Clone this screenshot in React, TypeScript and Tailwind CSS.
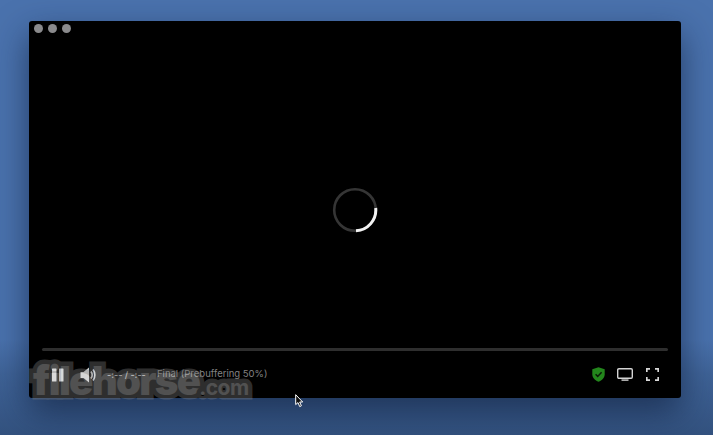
import React from 'react';

const sans = "font-['Inter','Liberation_Sans',sans-serif]";

const PauseIcon = () => (
  <svg width="14" height="14" viewBox="0 0 14 14" fill="#d8d8d8">
    <rect x="1" y="0.5" width="4.5" height="13" rx="0.5" />
    <rect x="8" y="0.5" width="4.5" height="13" rx="0.5" />
  </svg>
);

const VolumeIcon = () => (
  <svg width="16" height="16" viewBox="0 0 16 16" fill="none">
    <path d="M0.5 5H3.5L9 0.5V15.5L3.5 11H0.5Z" fill="#d0d0d0" />
    <path d="M11 4.5C12.4 6.5 12.4 9.5 11 11.5" stroke="#d0d0d0" strokeWidth="1.7" />
    <path d="M13 2.5C15.4 5.5 15.4 10.5 13 13.5" stroke="#d0d0d0" strokeWidth="1.7" />
  </svg>
);

const ShieldIcon = () => (
  <svg width="13" height="15" viewBox="0 0 13 15">
    <path d="M6.5 0.3L12.7 2.3V7.2C12.7 10.8 10 13.4 6.5 14.7C3 13.4 0.3 10.8 0.3 7.2V2.3Z" fill="#23861c" />
    <path d="M3.6 7.3L5.7 9.4L9.6 5.3" fill="none" stroke="#0a1a08" strokeWidth="1.5" />
  </svg>
);

const ScreenIcon = () => (
  <svg width="16" height="13" viewBox="0 0 16 13" fill="none">
    <rect x="0.7" y="0.7" width="14.6" height="9.6" rx="1.2" stroke="#d4d4d4" strokeWidth="1.4" />
    <rect x="4.5" y="11.4" width="7" height="1.4" fill="#d4d4d4" />
  </svg>
);

const FullscreenIcon = () => (
  <svg width="13" height="13" viewBox="0 0 13 13" fill="none" stroke="#d8d8d8" strokeWidth="1.7">
    <path d="M0.8 4V0.8H4" />
    <path d="M9 0.8H12.2V4" />
    <path d="M12.2 9V12.2H9" />
    <path d="M4 12.2H0.8V9" />
  </svg>
);

const Spinner = () => (
  <svg width="46" height="46" viewBox="0 0 46 46" fill="none">
    <circle cx="23" cy="23" r="20.8" stroke="#353535" strokeWidth="2.6" />
    <path d="M43.7 21A20.8 20.8 0 0 1 24 43.8" stroke="#f2f2f2" strokeWidth="3" />
  </svg>
);

const App: React.FC = () => {
  return (
    <div className={`relative w-[713px] h-[435px] overflow-hidden bg-[linear-gradient(180deg,#4a72ad_0%,#4a72ad_78%,#3f6397_86%,#33527f_100%)] pt-[21px] pl-[29px] ${sans}`}>
      {/* Player window */}
      <div className="w-[652px] h-[377px] rounded-[3px] bg-black flex flex-col shadow-[0_14px_34px_rgba(15,30,60,0.65)]">
        <div className="flex gap-[5px] pt-[3px] pl-[5px]">
          <span className="w-[9px] h-[9px] rounded-full bg-[#8a8a8c]" />
          <span className="w-[9px] h-[9px] rounded-full bg-[#8a8a8c]" />
          <span className="w-[9px] h-[9px] rounded-full bg-[#8a8a8c]" />
        </div>

        <div className="flex-1 flex items-center justify-center pt-[38px]">
          <Spinner />
        </div>

        <div className="h-[3px] mx-[13px] bg-[#2e2e2e] rounded-full" />

        <div className="h-[47px] flex items-center pl-[22px] pr-[22px]">
          <PauseIcon />
          <div className="ml-[15px]">
            <VolumeIcon />
          </div>
          <span className="ml-[11px] w-[41px] text-[9px] font-semibold text-[#9a9a9a] whitespace-nowrap">-:-- / -:--</span>
          <span className="ml-[9px] text-[9.5px] text-[#828282] whitespace-nowrap">Final (Prebuffering 50%)</span>
          <div className="ml-auto flex items-center gap-[12px]">
            <ShieldIcon />
            <ScreenIcon />
            <div className="ml-[1px]">
              <FullscreenIcon />
            </div>
          </div>
        </div>
      </div>

      {/* Watermark */}
      <div className="absolute left-[33px] top-[356px] flex items-baseline font-['Inter',sans-serif] font-black text-[#e0e0e0] opacity-[0.36] [-webkit-text-stroke:9px_#808080] [paint-order:stroke_fill] whitespace-nowrap">
        <span className="text-[40px] tracking-[-1.7px] leading-[50px]">filehorse</span>
        <span className="text-[21px] font-bold tracking-[-0.5px] leading-[50px]">.com</span>
      </div>

      {/* Cursor */}
      <svg className="absolute left-[295px] top-[394px]" width="9" height="14" viewBox="0 0 9 14">
        <path d="M0.7 0.7V10.6L3 8.6L4.7 12.6L6.4 11.8L4.7 8H7.7Z" fill="#111111" stroke="#ffffff" strokeWidth="1" />
      </svg>
    </div>
  );
};

export default App;
